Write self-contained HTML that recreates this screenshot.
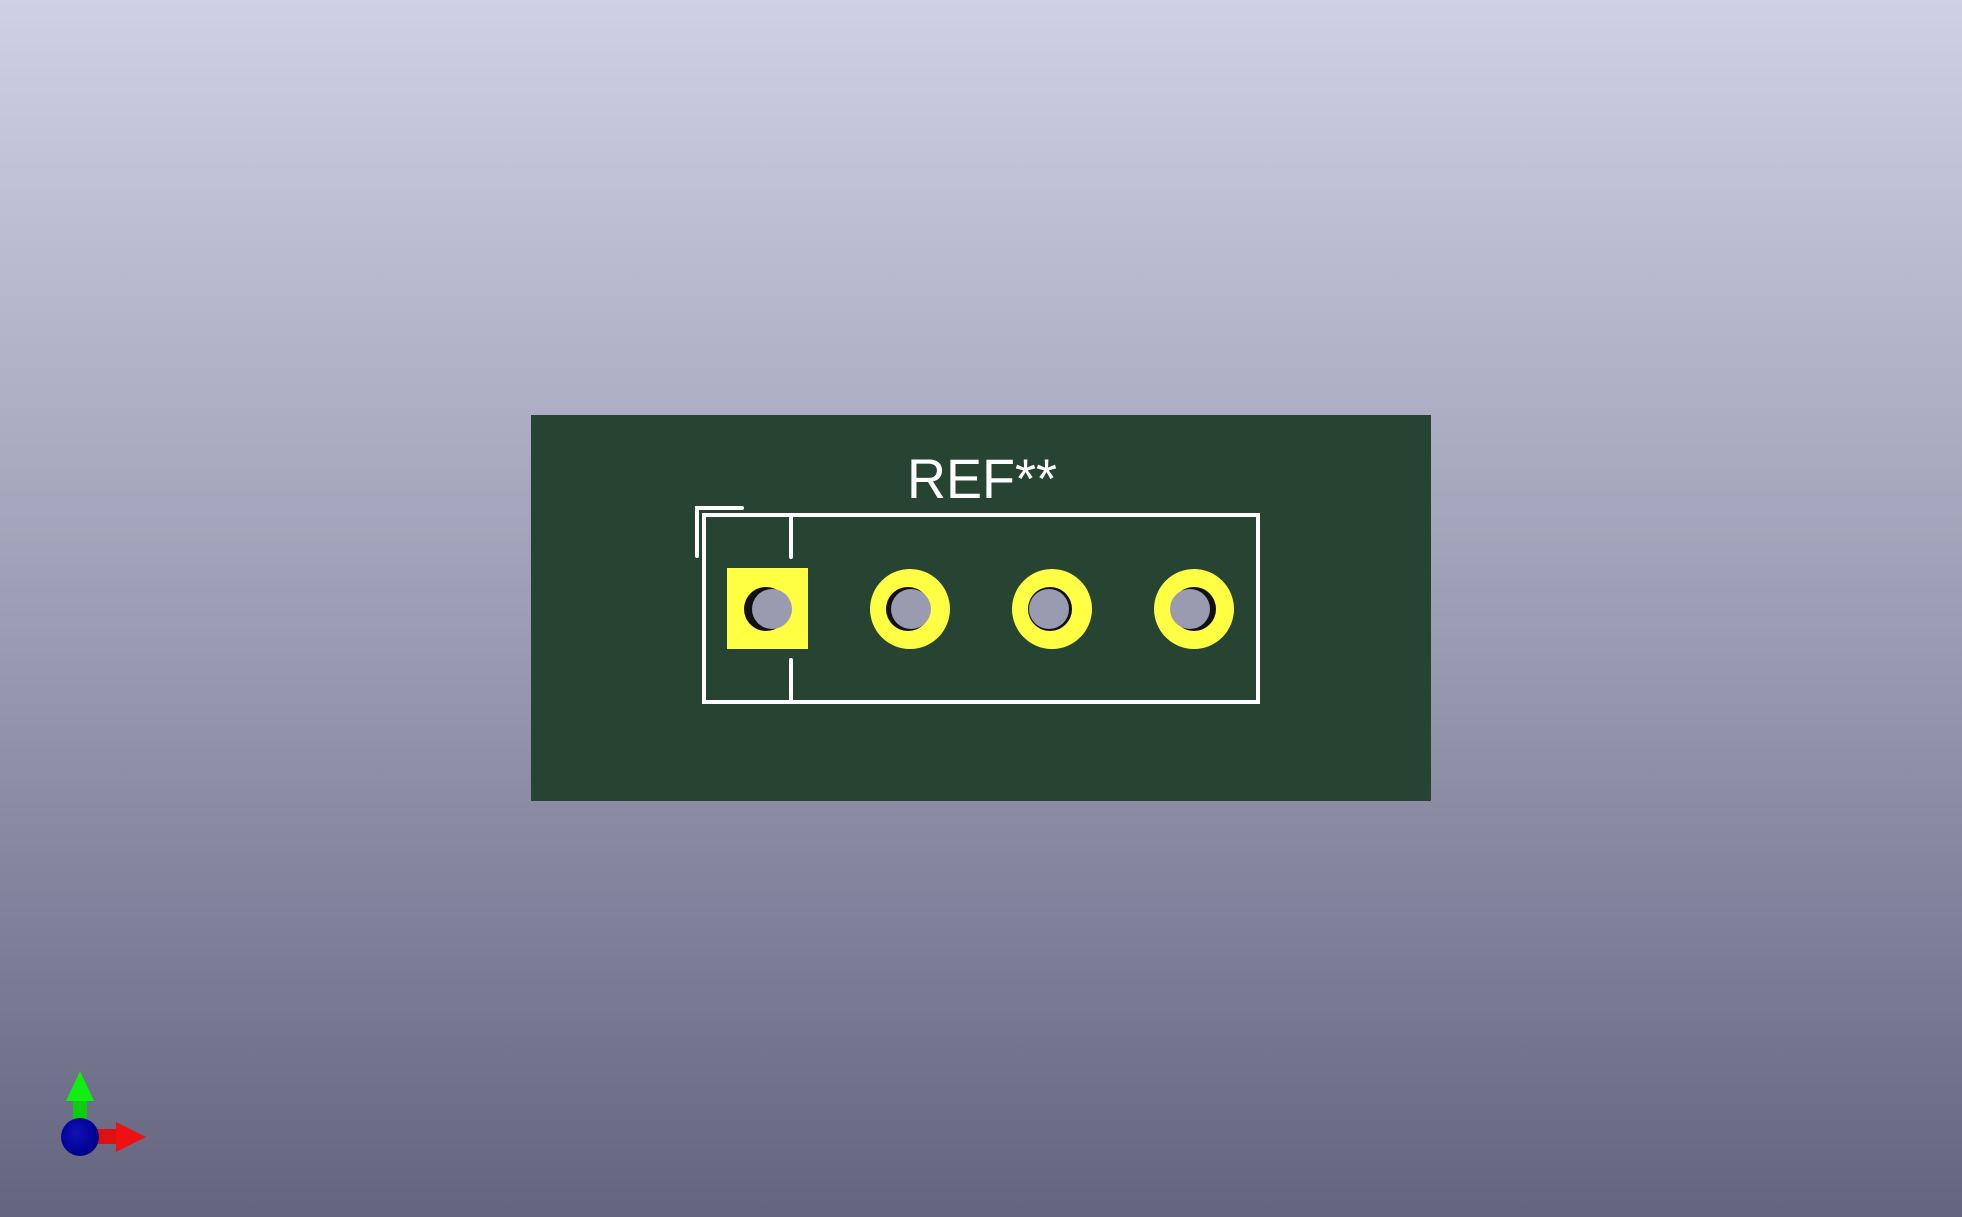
<!DOCTYPE html>
<html><head><style>
html,body{margin:0;padding:0;width:1962px;height:1217px;overflow:hidden;background:linear-gradient(#cfcfe6,#9898b0 55%,#646480);}
svg{position:absolute;left:0;top:0}
</style></head><body>
<svg width="1962" height="1217" viewBox="0 0 1962 1217">
<defs>
<radialGradient id="b" cx="0.4" cy="0.4" r="0.6"><stop offset="0" stop-color="#1010b8"/><stop offset="1" stop-color="#00008a"/></radialGradient>
</defs>
<rect x="531" y="415" width="900" height="386" fill="#264431"/>
<g fill="none" stroke="#fff" stroke-width="4" stroke-linecap="round">
<rect x="704" y="515" width="554" height="187"/>
<line x1="791" y1="515" x2="791" y2="557"/>
<line x1="791" y1="660" x2="791" y2="702"/>
<polyline points="697,556 697,508 742,508"/>
</g>
<text x="907" y="498" font-family="Liberation Sans, sans-serif" font-size="56" fill="#fff" textLength="150" lengthAdjust="spacingAndGlyphs">REF**</text>
<rect x="727" y="568" width="81" height="81" fill="#ffff44"/>
<circle cx="910" cy="609" r="40" fill="#ffff44"/>
<circle cx="1052" cy="609" r="40" fill="#ffff44"/>
<circle cx="1194" cy="609" r="40" fill="#ffff44"/>
<g fill="#111">
<circle cx="766" cy="609" r="22"/>
<circle cx="908" cy="609" r="22"/>
<circle cx="1050" cy="609" r="22"/>
<circle cx="1194" cy="609" r="22"/>
</g>
<g fill="#9a9ab0">
<circle cx="772" cy="609" r="20"/>
<circle cx="911" cy="609" r="20"/>
<circle cx="1049" cy="609" r="20"/>
<circle cx="1190" cy="609" r="20"/>
</g>
<rect x="73" y="1096" width="14" height="40" fill="#10cc10"/>
<polygon points="80,1071 66,1101 94,1101" fill="#11ee11"/>
<rect x="90" y="1129" width="28" height="15" fill="#dd1111"/>
<polygon points="146,1137 116,1122 116,1152" fill="#ee1111"/>
<circle cx="80" cy="1137" r="19" fill="url(#b)"/>
</svg>
</body></html>
